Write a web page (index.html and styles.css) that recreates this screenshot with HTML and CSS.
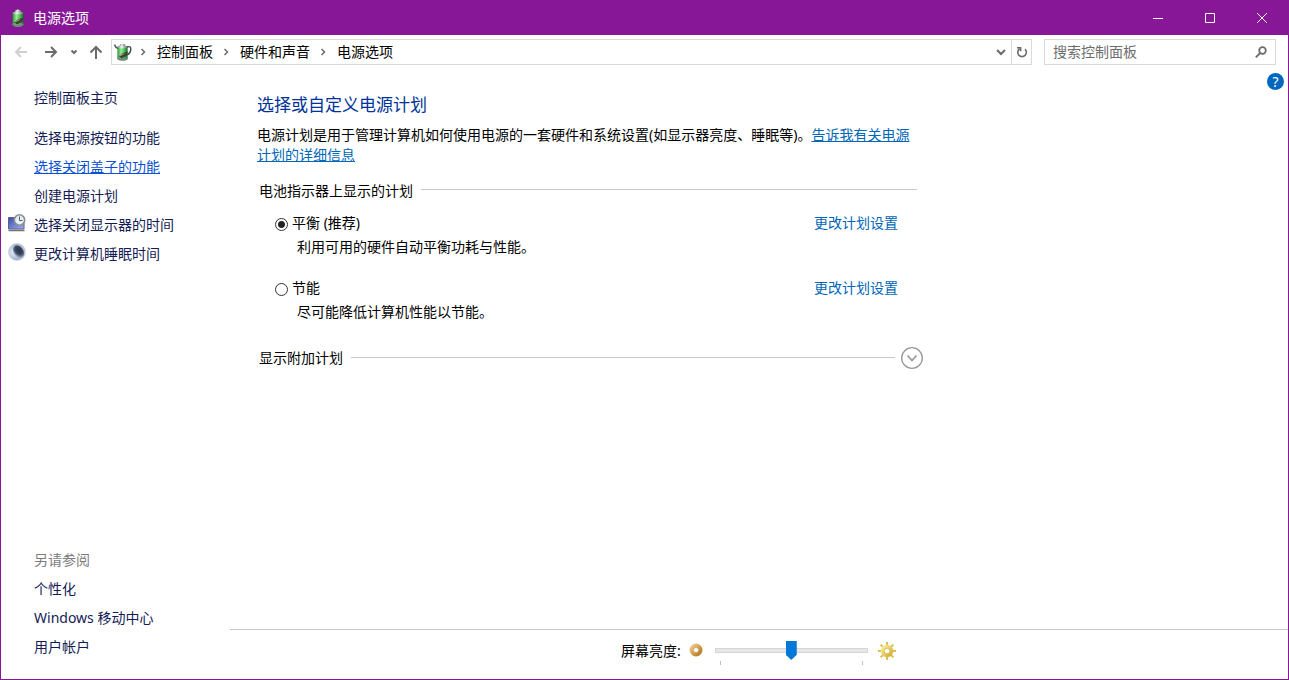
FILE: index.html
```
<!DOCTYPE html>
<html lang="zh-CN">
<head>
<meta charset="utf-8">
<title>电源选项</title>
<link rel="stylesheet" href="styles.css">
</head>
<body>
<svg class="defs" aria-hidden="true">
  <defs>
    <linearGradient id="green" x1="0" x2="1" y1="0" y2="0">
      <stop offset="0" stop-color="#2d8a3a"/><stop offset=".35" stop-color="#8df08e"/><stop offset=".65" stop-color="#4fc65a"/><stop offset="1" stop-color="#1b6428"/>
    </linearGradient>
    <linearGradient id="metal" x1="0" x2="1" y1="0" y2="0">
      <stop offset="0" stop-color="#77807c"/><stop offset=".4" stop-color="#eef4f0"/><stop offset="1" stop-color="#5f6b66"/>
    </linearGradient>
    <linearGradient id="screen" x1="0" x2="1" y1="0" y2="1">
      <stop offset="0" stop-color="#3d4da8"/><stop offset="1" stop-color="#9fb0f4"/>
    </linearGradient>
    <radialGradient id="moon" cx=".3" cy=".5" r=".75">
      <stop offset="0" stop-color="#e6effb"/><stop offset=".6" stop-color="#a5b5d2"/><stop offset="1" stop-color="#c9cdd6"/>
    </radialGradient>
    <radialGradient id="shade" cx=".6" cy=".45" r=".55">
      <stop offset="0" stop-color="#293246"/><stop offset=".6" stop-color="#3a4660"/><stop offset="1" stop-color="#8797b5"/>
    </radialGradient>
    <linearGradient id="gold" x1="0" x2="1" y1="0" y2="1">
      <stop offset="0" stop-color="#efc985"/><stop offset="1" stop-color="#b57a22"/>
    </linearGradient>
    <linearGradient id="sun" x1="0" x2="1" y1="0" y2="1">
      <stop offset="0" stop-color="#f8ef9c"/><stop offset="1" stop-color="#d3ad35"/>
    </linearGradient>
    <symbol id="battery" viewBox="0 0 14 18">
      <path d="M4 2Q4 .5 7 .5T10 2V4H4z" fill="url(#metal)"/>
      <path d="M1.500 4Q1.500 2.500 7 2.500T12.500 4V15.500Q12.500 17.500 7 17.500T1.500 15.500z" fill="url(#green)"/>
      <path d="M1.500 4.500Q2 2.500 7 2.500T12.500 4.500Q10 5.500 7 5.500T1.500 4.500z" fill="url(#metal)"/>
      <path d="M1.500 14.500Q5 16.500 12.500 14.500V16Q11 17.700 7 17.700T1.500 16z" fill="#778780"/>
      <path d="M3 13.500L7.500 10L13 8.500L11 13L6 15.500z" fill="#3b4039"/>
      <path d="M4 13L9 10.500" stroke="#b9a36c" stroke-width="1"/>
    </symbol>
  </defs>
</svg>
<div class="window">
  <header class="titlebar">
    <svg class="title-icon" viewBox="0 0 14 18" aria-hidden="true"><use href="#battery"/></svg>
    <span class="title">电源选项</span>
    <div class="caption-buttons">
      <button type="button" aria-label="最小化"><svg viewBox="0 0 12 12"><path d="M1 6.500H11"/></svg></button>
      <button type="button" aria-label="最大化"><svg viewBox="0 0 12 12"><path d="M1.500 1.500H10.500V10.500H1.500z"/></svg></button>
      <button type="button" aria-label="关闭"><svg viewBox="0 0 12 12"><path d="M1 1L11 11M11 1L1 11"/></svg></button>
    </div>
  </header>

  <nav class="navbar">
    <button type="button" class="nav-button back" aria-label="后退" disabled><svg viewBox="0 0 14 14"><path d="M13 7H2M7 2L2 7L7 12"/></svg></button>
    <button type="button" class="nav-button forward" aria-label="前进"><svg viewBox="0 0 14 14"><path d="M1 7H12M7 2L12 7L7 12"/></svg></button>
    <button type="button" class="nav-button recent" aria-label="最近位置"><svg viewBox="0 0 8 8"><path d="M1.500 2.500L4 5L6.500 2.500"/></svg></button>
    <button type="button" class="nav-button up" aria-label="上移"><svg viewBox="0 0 14 14"><path d="M7 14V2M1.500 7.500L7 2L12.500 7.500"/></svg></button>
    <div class="address">
      <svg class="address-icon" viewBox="0 0 18 18" aria-hidden="true">
        <path d="M.8 1.500Q1 5 5 5.500M13 4Q17.500 2.500 16.700 7Q16 11 12 12.500" fill="none" stroke="#3c5058" stroke-width="1.500"/>
        <svg x="2" y="0" width="13" height="18" viewBox="0 0 14 18" preserveAspectRatio="none"><use href="#battery" width="14" height="18"/></svg>
      </svg>
      <svg class="chevron" viewBox="0 0 6 8" aria-hidden="true"><path d="M1.500 1L4.500 4L1.500 7"/></svg>
      <a href="#">控制面板</a>
      <svg class="chevron" viewBox="0 0 6 8" aria-hidden="true"><path d="M1.500 1L4.500 4L1.500 7"/></svg>
      <a href="#">硬件和声音</a>
      <svg class="chevron" viewBox="0 0 6 8" aria-hidden="true"><path d="M1.500 1L4.500 4L1.500 7"/></svg>
      <a href="#">电源选项</a>
      <button type="button" class="drop" aria-label="以前的位置"><svg viewBox="0 0 10 10"><path d="M1 3L5 7L9 3"/></svg></button>
      <button type="button" class="refresh" aria-label="刷新"><svg viewBox="0 0 12 12"><path d="M9 3.200A4.300 4.300 0 1 1 3.400 3M1 1.700H4.600V5.300"/></svg></button>
    </div>
    <div class="search">
      <input type="text" placeholder="搜索控制面板" aria-label="搜索控制面板">
      <svg viewBox="0 0 12 12" aria-hidden="true"><circle cx="7.500" cy="4.500" r="3.300"/><path d="M5.200 7L.8 11.300"/></svg>
    </div>
  </nav>

  <div class="body">
    <aside class="sidebar">
      <a class="home" href="#">控制面板主页</a>
      <ul class="links">
        <li><a href="#">选择电源按钮的功能</a></li>
        <li><a class="hovered" href="#">选择关闭盖子的功能</a></li>
        <li><a href="#">创建电源计划</a></li>
        <li>
          <svg class="task-icon" viewBox="0 0 18 18" aria-hidden="true">
            <path d="M.5 3.500H16V15H.5z" fill="url(#screen)" stroke="#56608c"/>
            <path d="M.5 16.500H16.500" stroke="#74716c" stroke-width="1.500"/>
            <circle cx="11.500" cy="6" r="5.200" fill="#e8eff2" stroke="#8a8f92" stroke-width="1.600"/>
            <path d="M11.500 2.500V6.500H14.500" fill="none" stroke="#4f6470"/>
          </svg>
          <a href="#">选择关闭显示器的时间</a>
        </li>
        <li>
          <svg class="task-icon" viewBox="0 0 18 18" aria-hidden="true">
            <circle cx="9" cy="9" r="8.500" fill="url(#moon)" stroke="#c8ccd2" stroke-width=".6"/>
            <ellipse cx="10.500" cy="8.500" rx="4.800" ry="6.800" transform="rotate(-38 10.500 8.500)" fill="url(#shade)"/>
          </svg>
          <a href="#">更改计算机睡眠时间</a>
        </li>
      </ul>
      <div class="related">
        <h2>另请参阅</h2>
        <ul class="links">
          <li><a href="#">个性化</a></li>
          <li><a href="#">Windows 移动中心</a></li>
          <li><a href="#">用户帐户</a></li>
        </ul>
      </div>
    </aside>

    <div class="pane">
      <div class="pane-top">
        <main class="content">
          <h1>选择或自定义电源计划</h1>
          <p class="intro">电源计划是用于管理计算机如何使用电源的一套硬件和系统设置(如显示器亮度、睡眠等)。<a href="#">告诉我有关电源计划的详细信息</a></p>
          <section>
            <div class="group-head"><h2>电池指示器上显示的计划</h2><span class="rule"></span></div>
            <div class="plan">
              <div class="plan-row">
                <input type="radio" name="plan" id="balanced" checked>
                <label for="balanced">平衡 (推荐)</label>
                <a href="#">更改计划设置</a>
              </div>
              <p>利用可用的硬件自动平衡功耗与性能。</p>
            </div>
            <div class="plan">
              <div class="plan-row">
                <input type="radio" name="plan" id="saver">
                <label for="saver">节能</label>
                <a href="#">更改计划设置</a>
              </div>
              <p>尽可能降低计算机性能以节能。</p>
            </div>
          </section>
          <div class="group-head extra">
            <h2>显示附加计划</h2><span class="rule"></span>
            <button type="button" class="expand" aria-label="显示附加计划"><svg viewBox="0 0 22 22"><circle cx="11" cy="11" r="10.300"/><path d="M6.500 8.500L11 13.500L15.500 8.500" stroke-width="1.800"/></svg></button>
          </div>
        </main>
        <button type="button" class="help" aria-label="帮助">?</button>
      </div>
      <footer class="brightness">
        <label for="level">屏幕亮度:</label>
        <svg class="dim" viewBox="0 0 14 14" aria-hidden="true"><circle cx="7" cy="7" r="4.500" fill="#fff" stroke="url(#gold)" stroke-width="4"/><circle cx="7" cy="7" r="2.500" fill="#fff" stroke="#ad7930" stroke-width=".5"/></svg>
        <div class="slider">
          <input type="range" id="level" min="0" max="100" value="50">
          <div class="ticks"><span></span><span></span></div>
        </div>
        <svg class="bright" viewBox="0 0 18 18" aria-hidden="true">
          <path d="M9 0V4M9 14V18M0 9H4M14 9H18M2.600 2.600L5 5M13 13L15.400 15.400M2.600 15.400L5 13M13 5L15.400 2.600" stroke="#d9bf50" stroke-width="2"/>
          <circle cx="9" cy="9" r="4.500" fill="#fffdf0" stroke="url(#sun)" stroke-width="3.500"/>
          <circle cx="9" cy="9" r="2.800" fill="none" stroke="#c4a236" stroke-width=".6"/>
        </svg>
      </footer>
    </div>
  </div>
</div>
</body>
</html>
```
FILE: styles.css
```
* {
  box-sizing: border-box;
}

body {
  margin: 0;
  background: #fff;
  color: #000;
  font: 14px/20px "Noto Sans", "Noto Sans CJK SC", sans-serif;
}

h1, h2, p, ul {
  margin: 0;
  padding: 0;
  font-size: 14px;
  font-weight: 400;
}

ul {
  list-style: none;
}

a {
  color: #0066b8;
  text-decoration: none;
}

button {
  display: flex;
  align-items: center;
  justify-content: center;
  padding: 0;
  border: 0;
  background: none;
  font: inherit;
}

button svg,
.chevron,
.search svg {
  fill: none;
  stroke: #6b6b6b;
}

.defs {
  position: absolute;
  width: 0;
  height: 0;
}

.window {
  display: flex;
  flex-direction: column;
  min-height: 100vh;
  border: 1px solid #881798;
}

/* Title bar */
.titlebar {
  display: flex;
  align-items: center;
  height: 34px;
  padding-left: 10px;
  background: #881798;
  color: #fff;
}

.title-icon {
  width: 14px;
  height: 18px;
  margin-right: 8px;
}

.caption-buttons {
  display: flex;
  margin-left: auto;
}

.caption-buttons button {
  width: 52px;
  height: 34px;
}

.caption-buttons svg {
  width: 12px;
  height: 12px;
  stroke: #fff;
}

/* Navigation */
.navbar {
  display: flex;
  align-items: center;
  padding: 4px 12px 0 13px;
}

.nav-button svg {
  width: 14px;
  height: 14px;
  stroke-width: 2;
}

.back {
  margin-right: 16px;
}

.back svg {
  stroke: #d0d0d0;
}

.forward {
  margin-right: 12px;
}

.nav-button.recent svg {
  width: 8px;
  height: 8px;
}

.recent {
  margin-right: 11px;
}

.up {
  margin-right: 8px;
}

.address {
  display: flex;
  flex: 1;
  align-items: center;
  height: 26px;
  border: 1px solid #d9d9d9;
}

.address a {
  color: #000;
}

.address-icon {
  width: 18px;
  height: 18px;
  margin-left: 2px;
}

.chevron {
  width: 6px;
  height: 8px;
  margin: 0 11px 0 10px;
  stroke-width: 1.5;
}

.address-icon + .chevron {
  margin-left: 8px;
}

.drop {
  width: 20px;
  margin-left: auto;
}

.drop svg {
  width: 10px;
  height: 10px;
  stroke-width: 2;
}

.refresh {
  align-self: stretch;
  width: 20px;
  border-left: 1px solid #d9d9d9;
}

.refresh svg {
  width: 12px;
  height: 12px;
  stroke-width: 1.6;
}

.search {
  display: flex;
  align-items: center;
  width: 232px;
  height: 26px;
  margin-left: 12px;
  padding: 0 8px;
  border: 1px solid #d9d9d9;
}

.search input {
  flex: 1;
  min-width: 0;
  padding: 0;
  border: 0;
  outline: 0;
  background: none;
  font: inherit;
}

.search input::placeholder {
  color: #6d6d6d;
}

.search svg {
  width: 12px;
  height: 12px;
  stroke-width: 1.8;
}

/* Sidebar */
.body {
  display: flex;
  flex: 1;
}

.sidebar {
  display: flex;
  flex-direction: column;
  width: 229px;
  padding: 18px 0 18px 7px;
  line-height: 29px;
}

.sidebar a {
  color: #151c55;
}

.sidebar a.hovered {
  color: #0a50d0;
  text-decoration: underline;
}

.home,
.related,
.links li {
  padding-left: 26px;
}

.home {
  margin-bottom: 11px;
}

.links li {
  display: flex;
}

.related {
  margin-top: auto;
}

.related .links li {
  padding-left: 0;
}

.related h2 {
  color: #7d7d7d;
}

.task-icon {
  width: 18px;
  height: 18px;
  margin: 4px 8px 0 -26px;
}

/* Content */
.pane {
  display: flex;
  flex: 1;
  flex-direction: column;
}

.pane-top {
  display: flex;
  flex: 1;
  align-items: flex-start;
  justify-content: space-between;
  padding: 8px 4px 0 27px;
}

.content {
  width: 666px;
  padding-top: 20px;
}

h1 {
  margin-bottom: 8px;
  color: #003399;
  font-size: 17px;
  line-height: 24px;
}

.intro {
  max-width: 660px;
  margin-bottom: 16px;
}

.intro a {
  text-decoration: underline;
}

.group-head {
  display: flex;
  align-items: center;
  gap: 8px;
  padding: 0 6px 0 2px;
}

.rule {
  flex: 1;
  height: 1px;
  margin-bottom: 3px;
  background: #c8c8c8;
}

.plan {
  padding: 12px 25px 9px 18px;
}

.plan-row {
  display: flex;
  align-items: center;
}

.plan-row input {
  appearance: none;
  width: 13px;
  height: 13px;
  margin: 2px 4px 0 0;
  border: 1px solid #333;
  border-radius: 50%;
  background: #fff;
}

.plan-row input:checked {
  background: radial-gradient(circle, #222 3px, #fff 4px);
}

.plan-row a {
  margin-left: auto;
}

.plan p {
  margin-top: 4px;
  padding-left: 22px;
}

.extra {
  margin-top: 16px;
  padding-right: 0;
}

.extra .rule {
  margin-bottom: 1px;
}

.expand svg {
  width: 22px;
  height: 22px;
  stroke: #999;
  stroke-width: 1.3;
}

.extra .expand {
  margin-left: -2px;
}

.help {
  width: 17px;
  height: 17px;
  border-radius: 50%;
  background: #0067c0;
  color: #fff;
}

/* Brightness bar */
.brightness {
  display: flex;
  align-items: flex-start;
  height: 50px;
  padding: 11px 0 0 391px;
  border-top: 1px solid #c8c8c8;
}

.dim {
  width: 14px;
  height: 14px;
  margin: 2px 12px 0 8px;
}

.slider {
  width: 153px;
}

.slider input {
  display: block;
  appearance: none;
  width: 100%;
  height: 19px;
  margin: 0;
  background: none;
}

.slider input::-webkit-slider-runnable-track {
  height: 5px;
  border: 1px solid #d6d6d6;
  background: #e7e7e7;
}

.slider input::-webkit-slider-thumb {
  appearance: none;
  width: 11px;
  height: 19px;
  margin-top: -8px;
  background: #0078d7;
  clip-path: polygon(0 0, 100% 0, 100% 72%, 50% 100%, 0 72%);
}

.ticks {
  display: flex;
  justify-content: space-between;
  padding: 1px 5px 0;
}

.ticks span {
  width: 1px;
  height: 4px;
  background: #c0c0c0;
}

.bright {
  width: 18px;
  height: 18px;
  margin: 1px 0 0 10px;
}
```
